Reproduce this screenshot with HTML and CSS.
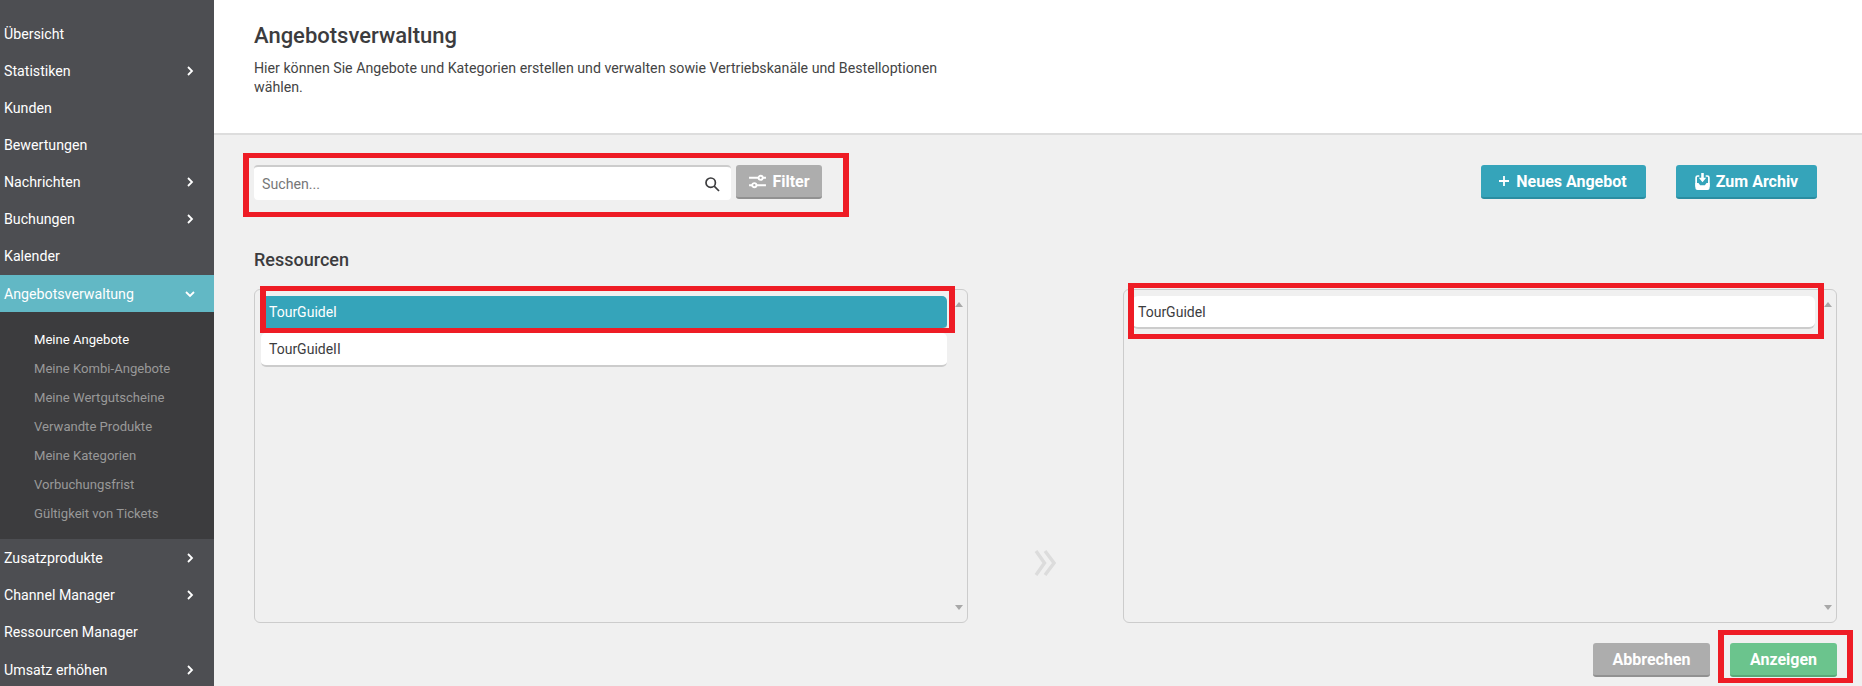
FILE: index.html
```html
<!DOCTYPE html>
<html lang="de">
<head>
<meta charset="utf-8">
<title>Angebotsverwaltung</title>
<link rel="stylesheet" href="styles.css">
</head>
<body>
<nav class="sidebar">
  <a class="nav-row">Übersicht</a>
  <a class="nav-row">Statistiken<svg class="chev" viewBox="0 0 8 10"><path d="M2 1l4 4-4 4"/></svg></a>
  <a class="nav-row">Kunden</a>
  <a class="nav-row">Bewertungen</a>
  <a class="nav-row">Nachrichten<svg class="chev" viewBox="0 0 8 10"><path d="M2 1l4 4-4 4"/></svg></a>
  <a class="nav-row">Buchungen<svg class="chev" viewBox="0 0 8 10"><path d="M2 1l4 4-4 4"/></svg></a>
  <a class="nav-row">Kalender</a>
  <a class="nav-row active">Angebotsverwaltung<svg class="chev down" viewBox="0 0 10 8"><path d="M1 2l4 4 4-4"/></svg></a>
  <div class="submenu">
    <a class="sub-row current">Meine Angebote</a>
    <a class="sub-row">Meine Kombi-Angebote</a>
    <a class="sub-row">Meine Wertgutscheine</a>
    <a class="sub-row">Verwandte Produkte</a>
    <a class="sub-row">Meine Kategorien</a>
    <a class="sub-row">Vorbuchungsfrist</a>
    <a class="sub-row">Gültigkeit von Tickets</a>
  </div>
  <a class="nav-row">Zusatzprodukte<svg class="chev" viewBox="0 0 8 10"><path d="M2 1l4 4-4 4"/></svg></a>
  <a class="nav-row">Channel Manager<svg class="chev" viewBox="0 0 8 10"><path d="M2 1l4 4-4 4"/></svg></a>
  <a class="nav-row">Ressourcen Manager</a>
  <a class="nav-row">Umsatz erhöhen<svg class="chev" viewBox="0 0 8 10"><path d="M2 1l4 4-4 4"/></svg></a>
</nav>
<main class="main">
  <header class="page-head">
    <h1 class="page-title">Angebotsverwaltung</h1>
    <p class="page-desc">Hier können Sie Angebote und Kategorien erstellen und verwalten sowie Vertriebskanäle und Bestelloptionen wählen.</p>
  </header>
  <section class="content">
    <div class="toolbar">
      <div class="search-group">
        <div class="search">
          <span class="search-text">Suchen...</span>
          <svg class="search-icon" viewBox="0 0 16 16"><circle cx="6.7" cy="6.7" r="4.7"/><path d="M10.200 10.200L15 15"/></svg>
        </div>
        <button class="btn grey filter"><svg class="filter-icon" viewBox="0 0 18 14"><path d="M1 3.500h9M14 3.500h3M1 10.500h3M8 10.500h9"/><circle cx="12" cy="3.500" r="2"/><circle cx="6" cy="10.500" r="2"/></svg>Filter</button>
      </div>
      <div class="actions">
        <button class="btn teal new"><svg class="plus-icon" viewBox="0 0 12 12"><path d="M6 1v10M1 6h10"/></svg>Neues Angebot</button>
        <button class="btn teal archive"><svg class="archive-icon" viewBox="0 0 14 16"><path class="archive-frame" d="M4 2.800H2.500q-1.500 0-1.500 1.500V13M10 2.800h1.500q1.500 0 1.500 1.500V13"/><path d="M5.800 0h2.400v4.500h2.300L7 8.800 3.500 4.500h2.300z"/><path d="M0.300 9.500h2.900l1.600 2h4.400l1.600-2h2.900v4.500q0 2-2 2H2.300q-2 0-2-2z"/></svg>Zum Archiv</button>
      </div>
    </div>
    <h2 class="section-title">Ressourcen</h2>
    <div class="lists">
      <div class="list-box">
        <div class="item selected">TourGuideI</div>
        <div class="item">TourGuideII</div>
        <span class="arrow up"></span>
        <span class="arrow dn"></span>
      </div>
      <div class="transfer">
        <svg class="transfer-icon" viewBox="0 0 22 26"><path d="M2 1l8.500 12L2 25M11 1l9 12-9 12"/></svg>
      </div>
      <div class="list-box">
        <div class="item chosen">TourGuideI</div>
        <span class="arrow up"></span>
        <span class="arrow dn"></span>
      </div>
    </div>
    <div class="footer-actions">
      <button class="btn grey cancel">Abbrechen</button>
      <button class="btn green show">Anzeigen</button>
    </div>
  </section>
</main>
<div class="mark mark-search"></div>
<div class="mark mark-left"></div>
<div class="mark mark-right"></div>
<div class="mark mark-show"></div>
</body>
</html>
```
FILE: styles.css
```css
* { box-sizing: border-box; }
html, body { margin: 0; height: 686px; overflow: hidden; }
body {
  display: flex;
  position: relative;
  font-family: Roboto, "Liberation Sans", sans-serif;
  background: #f0f0f0;
  color: #3c3c3e;
}
.sidebar {
  flex: 0 0 214px;
  height: 686px;
  overflow: hidden;
  padding-top: 16px;
  background: #4d4e52;
}
.nav-row {
  display: flex;
  align-items: center;
  justify-content: space-between;
  height: 37px;
  padding: 0 20px 1px 4px;
  color: #fff;
  font-size: 14.2px;
}
.nav-row.active { background: #62b8c5; padding-bottom: 0; }
.submenu ~ .nav-row { padding-bottom: 0; }
.submenu ~ .nav-row:last-child { padding-top: 2px; }
.chev { width: 8px; height: 10px; fill: none; stroke: #fff; stroke-width: 1.8; }
.chev.down { width: 10px; height: 8px; margin-right: -1px; }
.submenu {
  height: 227px;
  padding-top: 13px;
  background: #3c3c3e;
}
.sub-row {
  display: flex;
  align-items: center;
  height: 29px;
  padding-left: 34px;
  color: #999;
  font-size: 13.100px;
}
.sub-row.current { color: #fff; }
.main { flex: 1; min-width: 0; }
.page-head {
  height: 135px;
  padding: 23px 40px 0;
  background: #fff;
  border-bottom: 2px solid #ddd;
}
.page-title {
  margin: 0;
  font-size: 22px;
  font-weight: 500;
  line-height: 26px;
  color: #3c3c3e;
}
.page-desc {
  width: 720px;
  margin: 10px 0 0;
  font-size: 14.2px;
  line-height: 18.500px;
  color: #444;
}
.content { padding: 30px 25px 0 40px; }
.toolbar {
  display: flex;
  justify-content: space-between;
  padding-right: 20px;
}
.search-group { display: flex; gap: 5px; }
.search {
  display: flex;
  align-items: center;
  justify-content: space-between;
  width: 477px;
  height: 35px;
  padding: 0 11px 0 8px;
  background: #fff;
  border-top: 2px solid #ccc;
  border-radius: 4px;
}
.search-text { font-size: 14.2px; color: #777; }
.search-icon { width: 16px; height: 16px; fill: none; stroke: #3c3c3e; stroke-width: 1.7; }
.btn {
  display: inline-flex;
  align-items: center;
  justify-content: center;
  height: 34px;
  padding: 0;
  border: 0;
  border-bottom: 2px solid transparent;
  border-radius: 3px;
  color: #fff;
  font-family: inherit;
  font-size: 16px;
  font-weight: 700;
}
.btn.grey { background: #adadad; border-bottom-color: #919191; }
.btn.teal { background: #35a4ba; border-bottom-color: #2a8da1; }
.btn.green { background: #6bc48d; border-bottom-color: #5aa878; }
.filter { width: 86px; gap: 5px; }
.filter-icon { width: 19px; height: 15px; fill: none; stroke: #fff; stroke-width: 1.8; }
.actions { display: flex; gap: 30px; }
.new { width: 165px; gap: 6px; padding-right: 2px; }
.plus-icon { width: 12px; height: 12px; fill: none; stroke: #fff; stroke-width: 1.8; }
.archive { width: 141px; gap: 6px; }
.archive-icon { width: 15px; height: 17px; fill: #fff; }
.archive-frame { fill: none; stroke: #fff; stroke-width: 1.6; }
.section-title {
  margin: 49px 0 0;
  font-size: 18px;
  font-weight: 500;
  line-height: 22px;
  color: #3c3c3e;
}
.lists {
  display: flex;
  justify-content: space-between;
  margin-top: 18px;
}
.list-box {
  position: relative;
  width: 714px;
  height: 334px;
  padding: 6px 6px;
  border: 1px solid #ccc;
  border-radius: 6px;
}
.transfer { display: flex; align-items: flex-end; padding-bottom: 47px; padding-right: 2px; }
.transfer-icon { width: 22px; height: 26px; fill: none; stroke: #dcdcdc; stroke-width: 3.4; }
.item {
  display: flex;
  align-items: center;
  width: 686px;
  height: 34px;
  padding-left: 8px;
  background: #fff;
  border-bottom: 2px solid #ccc;
  border-radius: 5px;
  font-size: 14px;
  color: #3c3c3e;
}
.item + .item { margin-top: 3px; }
.item.selected { background: #35a4ba; color: #fff; }
.item.chosen { width: 683px; height: 33px; margin-left: 2px; padding-left: 6px; border-radius: 6px; }
.arrow {
  position: absolute;
  right: 4px;
  width: 0;
  height: 0;
  border-left: 4px solid transparent;
  border-right: 4px solid transparent;
}
.arrow.up { top: 12px; border-bottom: 5px solid #a8a8a8; }
.arrow.dn { bottom: 12px; border-top: 5px solid #a8a8a8; }
.footer-actions {
  display: flex;
  justify-content: flex-end;
  gap: 20px;
  margin-top: 20px;
}
.cancel { width: 117px; }
.show { width: 107px; }
.mark {
  position: absolute;
  border: solid #ee1c25;
  border-width: 5px 6px;
}
.mark-search { left: 243px; top: 153px; width: 606px; height: 64px; }
.mark-left { left: 260px; top: 286px; width: 695px; height: 47px; }
.mark-right { left: 1128px; top: 283px; width: 696px; height: 56px; }
.mark-show { left: 1718px; top: 630px; width: 135px; height: 53px; }
```
